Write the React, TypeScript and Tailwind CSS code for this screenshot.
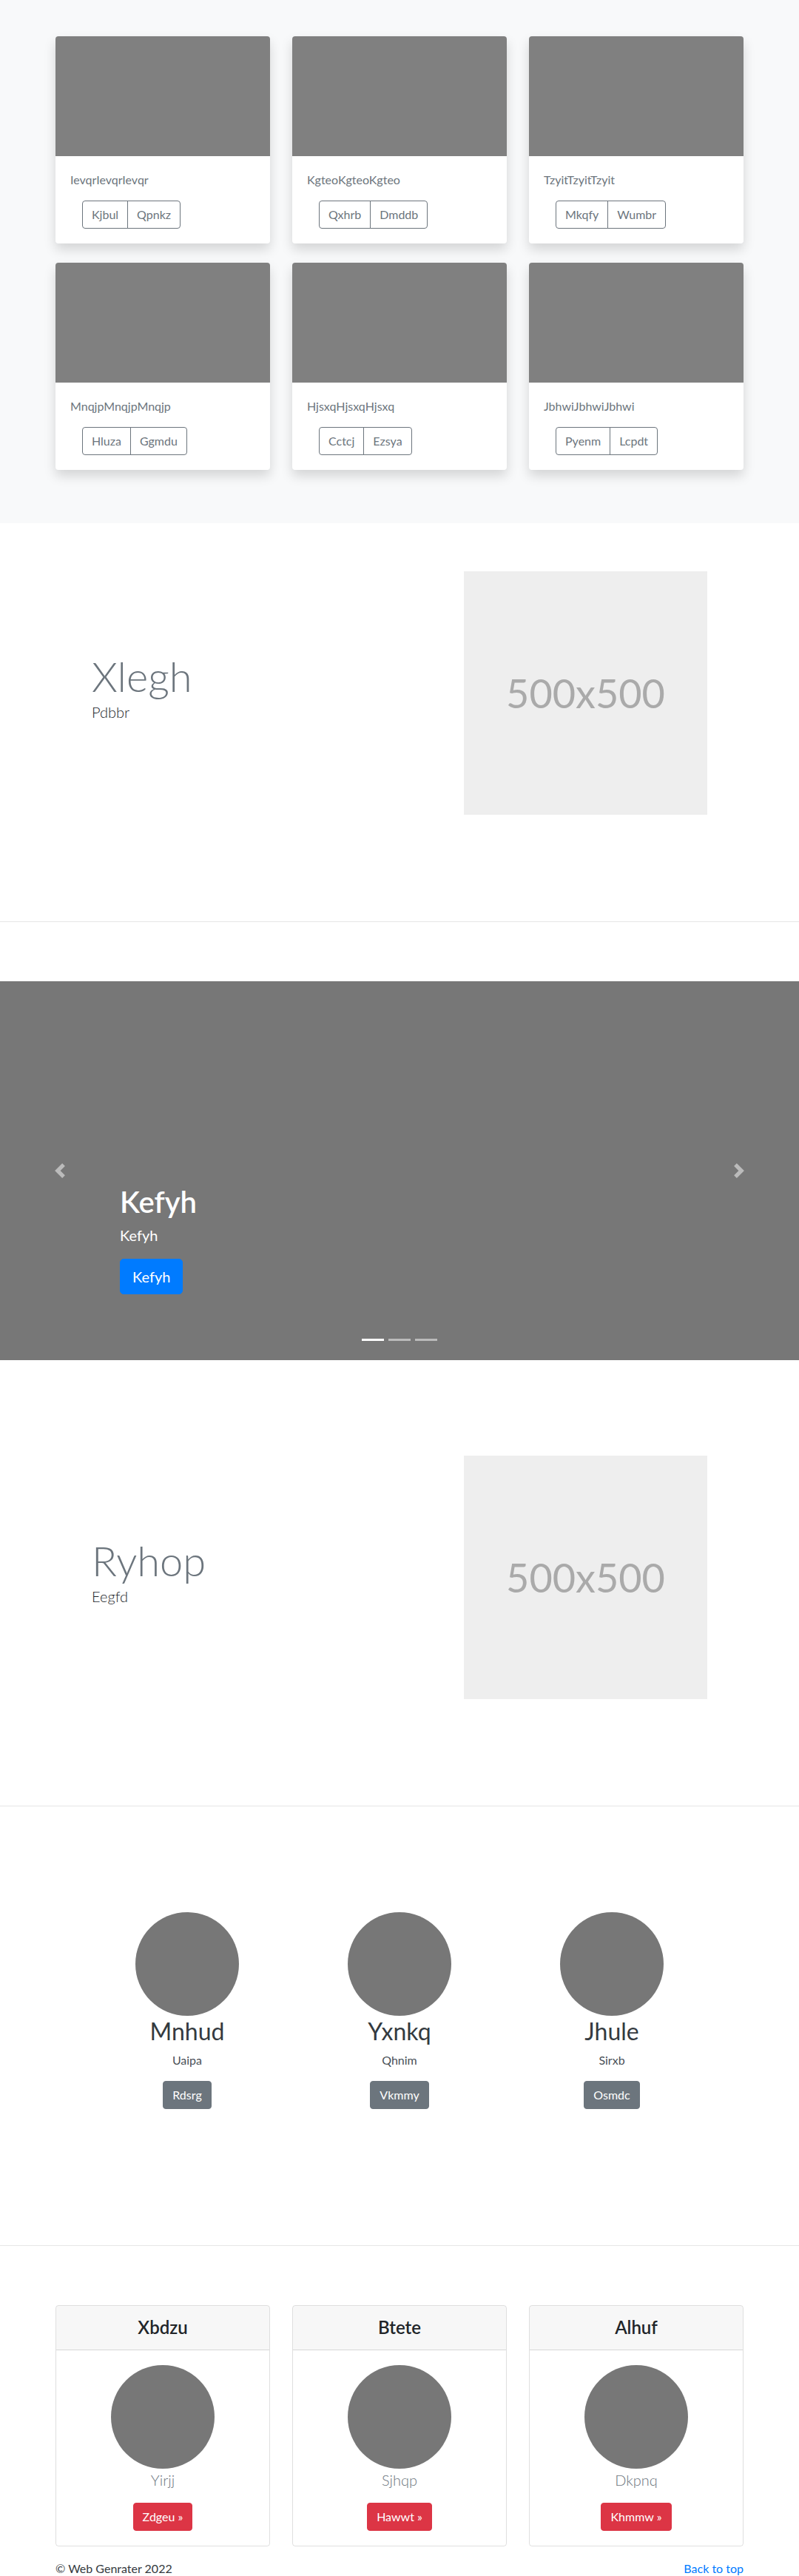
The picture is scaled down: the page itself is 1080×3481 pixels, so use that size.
import React from "react";

const albumCards = [
  { title: "IevqrIevqrIevqr", a: "Kjbul", b: "Qpnkz" },
  { title: "KgteoKgteoKgteo", a: "Qxhrb", b: "Dmddb" },
  { title: "TzyitTzyitTzyit", a: "Mkqfy", b: "Wumbr" },
  { title: "MnqjpMnqjpMnqjp", a: "Hluza", b: "Ggmdu" },
  { title: "HjsxqHjsxqHjsxq", a: "Cctcj", b: "Ezsya" },
  { title: "JbhwiJbhwiJbhwi", a: "Pyenm", b: "Lcpdt" },
];

const team = [
  { name: "Mnhud", sub: "Uaipa", btn: "Rdsrg" },
  { name: "Yxnkq", sub: "Qhnim", btn: "Vkmmy" },
  { name: "Jhule", sub: "Sirxb", btn: "Osmdc" },
];

const pricing = [
  { head: "Xbdzu", sub: "Yirjj", btn: "Zdgeu" },
  { head: "Btete", sub: "Sjhqp", btn: "Hawwt" },
  { head: "Alhuf", sub: "Dkpnq", btn: "Khmmw" },
];

const Featurette = ({ title, lead }: { title: string; lead: string }) => (
  <div className="w-[930px] mx-auto flex items-center">
    <div className="w-[465px] pl-[49px]">
      <h1 className="text-[56px] font-light leading-[1.2] text-[#6c757d]">{title}</h1>
      <p className="text-[20px] font-light leading-[1.5] text-[#212529] mb-4">{lead}</p>
    </div>
    <div className="pl-[87px]">
      <div className="w-[329px] h-[329px] bg-[#eeeeee] flex items-center justify-center">
        <span className="text-[54px] text-[#aaaaaa] leading-none">500x500</span>
      </div>
    </div>
  </div>
);

const App = () => {
  return (
    <div className="bg-white text-[#212529]" style={{ fontFamily: '"Lato", "Open Sans", sans-serif' }}>
      {/* album */}
      <section className="bg-[#f8f9fa] pt-[49px] pb-[72px]">
        <div className="w-[930px] mx-auto grid grid-cols-3 gap-x-[30px] gap-y-[26px]">
          {albumCards.map((c) => (
            <div key={c.title} className="bg-white rounded overflow-hidden shadow-[0_8px_16px_rgba(0,0,0,0.15)]">
              <div className="h-[162px] bg-[#808080]"></div>
              <div className="p-5">
                <p className="text-base leading-6 text-[#6c757d] mb-4">{c.title}</p>
                <div className="inline-flex ml-4">
                  <button className="border border-[#6c757d] text-[#6c757d] px-3 py-[6px] text-base leading-6 rounded-l">
                    {c.a}
                  </button>
                  <button className="border border-[#6c757d] -ml-px text-[#6c757d] px-3 py-[6px] text-base leading-6 rounded-r">
                    {c.b}
                  </button>
                </div>
              </div>
            </div>
          ))}
        </div>
      </section>

      <section className="pt-[65px] pb-[144px]">
        <Featurette title="Xlegh" lead="Pdbbr" />
      </section>
      <hr className="border-t border-[#e6e6e6]" />

      {/* carousel */}
      <div className="mt-[80px] relative h-[512px] bg-[#777777] overflow-hidden">
        <div className="absolute left-0 top-0 bottom-0 w-[15%] flex items-center justify-center opacity-50">
          <svg width="20" height="20" viewBox="0 0 8 8" fill="#fff">
            <path d="M5.25 0l-4 4 4 4 1.5-1.5L4.25 4l2.5-2.5L5.25 0z" />
          </svg>
        </div>
        <div className="absolute right-0 top-0 bottom-0 w-[15%] flex items-center justify-center opacity-50">
          <svg width="20" height="20" viewBox="0 0 8 8" fill="#fff">
            <path d="M2.75 0l-1.5 1.5L3.75 4l-2.5 2.5L2.75 8l4-4-4-4z" />
          </svg>
        </div>
        <div className="absolute left-[15%] right-[15%] bottom-[89px] text-white">
          <h1 className="text-[40px] font-semibold leading-[1.2] mb-[6px]">Kefyh</h1>
          <p className="text-[20px] leading-[1.5] mb-[17px]">Kefyh</p>
          <button className="bg-[#007bff] border border-[#007bff] text-white text-[20px] leading-[1.5] px-4 py-2 rounded-[5px]">
            Kefyh
          </button>
        </div>
        <div className="absolute bottom-[16px] left-0 right-0 flex justify-center">
          <span className="w-[30px] h-[3px] mx-[3px] my-[10px] bg-white"></span>
          <span className="w-[30px] h-[3px] mx-[3px] my-[10px] bg-white opacity-50"></span>
          <span className="w-[30px] h-[3px] mx-[3px] my-[10px] bg-white opacity-50"></span>
        </div>
      </div>

      <section className="pt-[129px] pb-[144px]">
        <Featurette title="Ryhop" lead="Eegfd" />
      </section>
      <hr className="border-t border-[#e6e6e6]" />

      {/* team */}
      <section className="pt-[143px] pb-[184px]">
        <div className="w-[861px] mx-auto grid grid-cols-3">
          {team.map((t) => (
            <div key={t.name} className="flex flex-col items-center text-center">
              <div className="w-[140px] h-[140px] rounded-full bg-[#777777]"></div>
              <h2 className="mt-[2px] text-[32px] leading-[1.2] mb-2 text-[#343a40]">{t.name}</h2>
              <p className="text-base leading-6 mb-4 text-[#495057]">{t.sub}</p>
              <button className="bg-[#6c757d] border border-[#6c757d] text-white px-3 py-[6px] text-base leading-6 rounded">
                {t.btn}
              </button>
            </div>
          ))}
        </div>
      </section>
      <hr className="border-t border-[#e6e6e6]" />

      {/* pricing */}
      <section className="pt-[80px]">
        <div className="w-[930px] mx-auto grid grid-cols-3 gap-x-[30px]">
          {pricing.map((p) => (
            <div key={p.head} className="border border-black/[.125] rounded overflow-hidden">
              <div className="bg-black/[.03] border-b border-black/[.125] py-[15px] text-center">
                <h4 className="text-[24px] leading-[1.2] font-semibold text-[#212529]">{p.head}</h4>
              </div>
              <div className="p-5 flex flex-col items-center text-center">
                <div className="w-[140px] h-[140px] rounded-full bg-[#777777]"></div>
                <p className="text-[20px] font-light leading-[1.5] text-[#6c757d] mb-4">{p.sub}</p>
                <button className="bg-[#dc3545] border border-[#dc3545] text-white px-3 py-[6px] text-base leading-6 rounded">
                  {p.btn} »
                </button>
              </div>
            </div>
          ))}
        </div>
      </section>

      <footer className="w-[930px] mx-auto mt-[18px] pb-12 flex justify-between text-base leading-6">
        <p className="text-[#343a40]">© Web Genrater 2022</p>
        <a href="#" className="text-[#007bff]">
          Back to top
        </a>
      </footer>
    </div>
  );
};

export default App;
